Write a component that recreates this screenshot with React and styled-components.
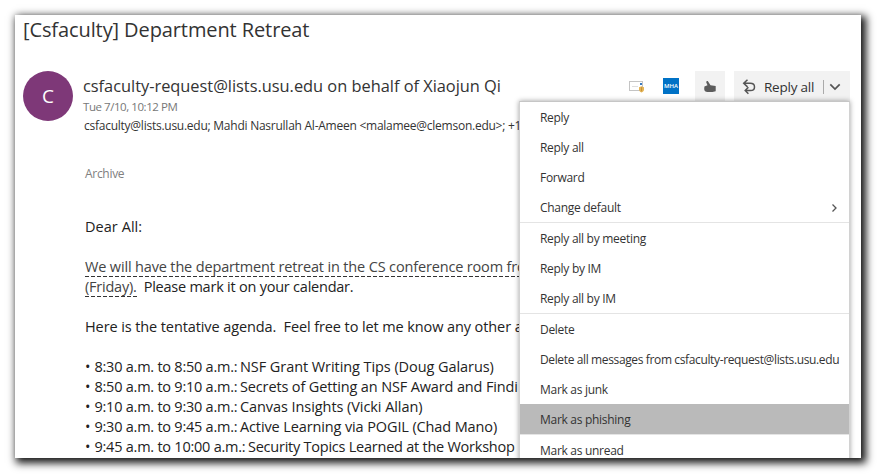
import React from "react";
import styled, { createGlobalStyle } from "styled-components";

const GlobalStyle = createGlobalStyle`
  * { box-sizing: border-box; }
  body { margin: 0; background: #fff; overflow: hidden; }
`;

const Page = styled.div`
  width: 877px;
  height: 474px;
  padding: 15px 16px 16px 15px;
  font-family: "Open Sans", "Noto Sans", sans-serif;
  color: #333;
`;
const Frame = styled.main`
  position: relative;
  height: 443px;
  background: #fff;
  box-shadow: 3px 3px 8px 2px rgba(0, 0, 0, 0.92);
`;
const Content = styled.div`
  height: 100%;
  overflow: hidden;
  padding-left: 8px;
`;
const Subject = styled.h1`
  margin: 0;
  height: 56px;
  font-size: 20px;
  font-weight: 400;
  line-height: 29px;
  letter-spacing: -0.1px;
`;
const Header = styled.header`
  display: flex;
  height: 82px;
`;
const Avatar = styled.div`
  flex: none;
  width: 50px;
  height: 50px;
  margin-right: 10px;
  border-radius: 50%;
  background: #7e3878;
  color: #fff;
  font-size: 19px;
  line-height: 51px;
  text-align: center;
`;
const Sender = styled.div`
  flex: 1;
  min-width: 0;
  white-space: nowrap;
`;
const Name = styled.div`
  height: 27px;
  font-size: 16.4px;
  line-height: 30px;
  letter-spacing: -0.02px;
`;
const Sent = styled.div`
  font-size: 11.5px;
  line-height: 18px;
  letter-spacing: -0.44px;
  color: #777;
`;
const Recipients = styled.div`
  padding-left: 1px;
  font-size: 12px;
  line-height: 20px;
  letter-spacing: -0.25px;
`;
const Actions = styled.div`
  display: flex;
  align-items: flex-start;
  margin-right: 11px;
`;
const AddIn = styled.div`
  display: flex;
  align-items: center;
  justify-content: center;
  height: 30px;
  width: 16px;
  margin-right: ${(p) => p.$gap}px;
`;
const Mha = styled.span`
  width: 16px;
  height: 16px;
  background: #0072c6;
  color: #fff;
  font-size: 6px;
  font-weight: 600;
  line-height: 16px;
  text-align: center;
`;
const ActionButton = styled.button`
  display: flex;
  align-items: center;
  width: ${(p) => p.$width}px;
  height: 31px;
  margin-left: ${(p) => p.$offset || 0}px;
  padding: 0 8px;
  border: 0;
  background: #f2f2f2;
  color: #333;
  font: 13.5px "Open Sans", sans-serif;
  letter-spacing: -0.22px;
`;
const ReplyLabel = styled.span`
  width: 59px;
  padding-left: 8px;
  white-space: nowrap;
  text-align: left;
`;
const Split = styled.span`
  width: 1px;
  height: 14px;
  margin: 0 5px 0 8px;
  background: #aaa;
`;
const Folder = styled.div`
  padding-left: 62px;
  height: 64px;
  font-size: 12px;
  letter-spacing: -0.3px;
  line-height: 42px;
  color: #808080;
`;
const Body = styled.article`
  padding-left: 62px;
  font-size: 14.5px;
  line-height: 20px;
  color: #222;
  white-space: pre;
`;
const Line = styled.p`
  margin: 0;
  height: 20px;
  letter-spacing: ${(p) => p.$track || 0}px;
`;
const Suggested = styled.span`
  display: inline-block;
  height: 20px;
  color: #444;
  background: repeating-linear-gradient(90deg, #333 0 4px, transparent 4px 6px) 0 100% / 100% 1px no-repeat;
`;
const Time = styled.span`
  display: inline-block;
  width: ${(p) => p.$width}px;
  letter-spacing: -0.24px;
`;
const Bullet = styled.span`
  display: inline-block;
  width: 9.5px;
`;
const MenuClip = styled.div`
  position: absolute;
  inset: 0 0 0 auto;
  width: 350px;
  overflow: hidden;
  pointer-events: none;
`;
const Menu = styled.nav`
  width: 331px;
  height: 400px;
  margin: 86px 0 0 8px;
  background: #fff;
  border: 1px solid #d2d2d2;
  border-top-color: #c6c6c6;
  border-bottom: 0;
  box-shadow: 0 0 5px rgba(0, 0, 0, 0.38);
`;
const MenuGroup = styled.div`
  border-bottom: 1px solid #e4e4e4;
`;
const MenuItem = styled.div`
  display: flex;
  align-items: center;
  justify-content: space-between;
  height: 30px;
  padding: 1px 10px 0 20px;
  background: ${(p) => (p.$active ? "#bababa" : "transparent")};
  color: #333;
  font-size: 12px;
  letter-spacing: ${(p) => p.$track ?? -0.29}px;
  white-space: nowrap;
`;

const MailIcon = () => (
  <svg width="16" height="16" viewBox="0 0 16 16">
    <rect x="1.5" y="3.5" width="13" height="9" fill="#fff" stroke="#c4c4c4" />
    <path d="M4 8.5h6" stroke="#dedede" />
    <path d="M12 5h2v2h-2z" fill="#3b7bc0" />
    <path d="M13.5 8.2l2.5 1v2.200c0 1.500-1 2.300-2.500 3-1.500-.7-2.500-1.500-2.500-3V9.200z" fill="#e3b354" />
    <path d="M13.500 9.200v4" stroke="#b8832c" strokeWidth=".7" />
  </svg>
);
const ThumbIcon = () => (
  <svg width="14" height="14" viewBox="0 0 14 14" fill="#5c5c5c">
    <path d="M1.400 6.400L4.500 5.300 3.300 2.500C3 1.200 4.500.6 5.100 1.600L7.500 5.300 12.700 6v5.200L9.500 12H4.500C2.500 12 1.200 10.800 1.200 9z" />
  </svg>
);
const ReplyAllIcon = () => (
  <svg width="14" height="16" viewBox="0 0 14 16" fill="none" stroke="#555" strokeWidth="1.500">
    <path d="M5.500.7L1.700 4.300 5.500 7.900M1.900 4.300H8.200C11 4.300 12.500 5.700 12.500 7.900S11 11.500 8.500 11.500H3.500M6.400 8.300L3.200 11.500 6.400 14.700" />
  </svg>
);
const Chevron = ({ right }) => (
  <svg width={right ? 9 : 12} height={right ? 10 : 8} viewBox={right ? "0 0 9 10" : "0 0 12 8"} fill="none" stroke="#555" strokeWidth={right ? 1.3 : 1.7}>
    <path d={right ? "M2.500 1.500L6 5 2.500 8.500" : "M1.300 1.300L6 6 10.700 1.300"} />
  </svg>
);

const groups = [
  [{ label: "Reply" }, { label: "Reply all" }, { label: "Forward" }, { label: "Change default", sub: true }],
  [{ label: "Reply all by meeting" }, { label: "Reply by IM" }, { label: "Reply all by IM" }],
  [
    { label: "Delete" },
    { label: "Delete all messages from csfaculty-request@lists.usu.edu", track: -0.37 },
    { label: "Mark as junk" },
    { label: "Mark as phishing", active: true },
  ],
  [{ label: "Mark as unread" }],
];

const agenda = [
  { time: "8:30 a.m. to 8:50 a.m.:", title: "NSF Grant Writing Tips (Doug Galarus)", width: 145.5, track: -0.07 },
  { time: "8:50 a.m. to 9:10 a.m.:", title: "Secrets of Getting an NSF Award and Findi", width: 145.5, track: -0.14 },
  { time: "9:10 a.m. to 9:30 a.m.:", title: "Canvas Insights (Vicki Allan)", width: 145.5, track: -0.07 },
  { time: "9:30 a.m. to 9:45 a.m.:", title: "Active Learning via POGIL (Chad Mano)", width: 145.5, track: -0.12 },
  { time: "9:45 a.m. to 10:00 a.m.:", title: "Security Topics Learned at the Workshop", width: 153.5, track: -0.24 },
];

export default function App() {
  return (
    <Page>
      <GlobalStyle />
      <Frame>
        <Content>
          <Subject>[Csfaculty] Department Retreat</Subject>
          <Header>
            <Avatar>C</Avatar>
            <Sender>
              <Name>csfaculty-request@lists.usu.edu on behalf of Xiaojun Qi</Name>
              <Sent>Tue 7/10, 10:12 PM</Sent>
              <Recipients>csfaculty@lists.usu.edu; Mahdi Nasrullah Al-Ameen &lt;malamee@clemson.edu&gt;; +1</Recipients>
            </Sender>
            <Actions>
              <AddIn $gap={19}><MailIcon /></AddIn>
              <AddIn $gap={16}><Mha>MHA</Mha></AddIn>
              <ActionButton $width={30}><ThumbIcon /></ActionButton>
              <ActionButton $width={116} $offset={9}>
                <ReplyAllIcon />
                <ReplyLabel>Reply all</ReplyLabel>
                <Split />
                <Chevron />
              </ActionButton>
            </Actions>
          </Header>
          <Folder>Archive</Folder>
          <Body>
            <Line $track={0.05}>Dear All:</Line>
            <Line />
            <Line $track={-0.155}><Suggested>We will have the department retreat in the CS conference room fro</Suggested></Line>
            <Line $track={-0.23}><Suggested>(Friday).</Suggested>{"  Please mark it on your calendar."}</Line>
            <Line />
            <Line $track={-0.1}>{"Here is the tentative agenda.  Feel free to let me know any other a"}</Line>
            <Line />
            {agenda.map((a) => (
              <Line key={a.time} $track={a.track}>
                <Bullet>•</Bullet>
                <Time $width={a.width}>{a.time}</Time>
                {a.title}
              </Line>
            ))}
          </Body>
        </Content>
        <MenuClip>
          <Menu>
            {groups.map((items, i) => (
              <MenuGroup key={i}>
                {items.map((m) => (
                  <MenuItem key={m.label} $active={m.active} $track={m.track}>
                    {m.label}
                    {m.sub && <Chevron right />}
                  </MenuItem>
                ))}
              </MenuGroup>
            ))}
          </Menu>
        </MenuClip>
      </Frame>
    </Page>
  );
}
